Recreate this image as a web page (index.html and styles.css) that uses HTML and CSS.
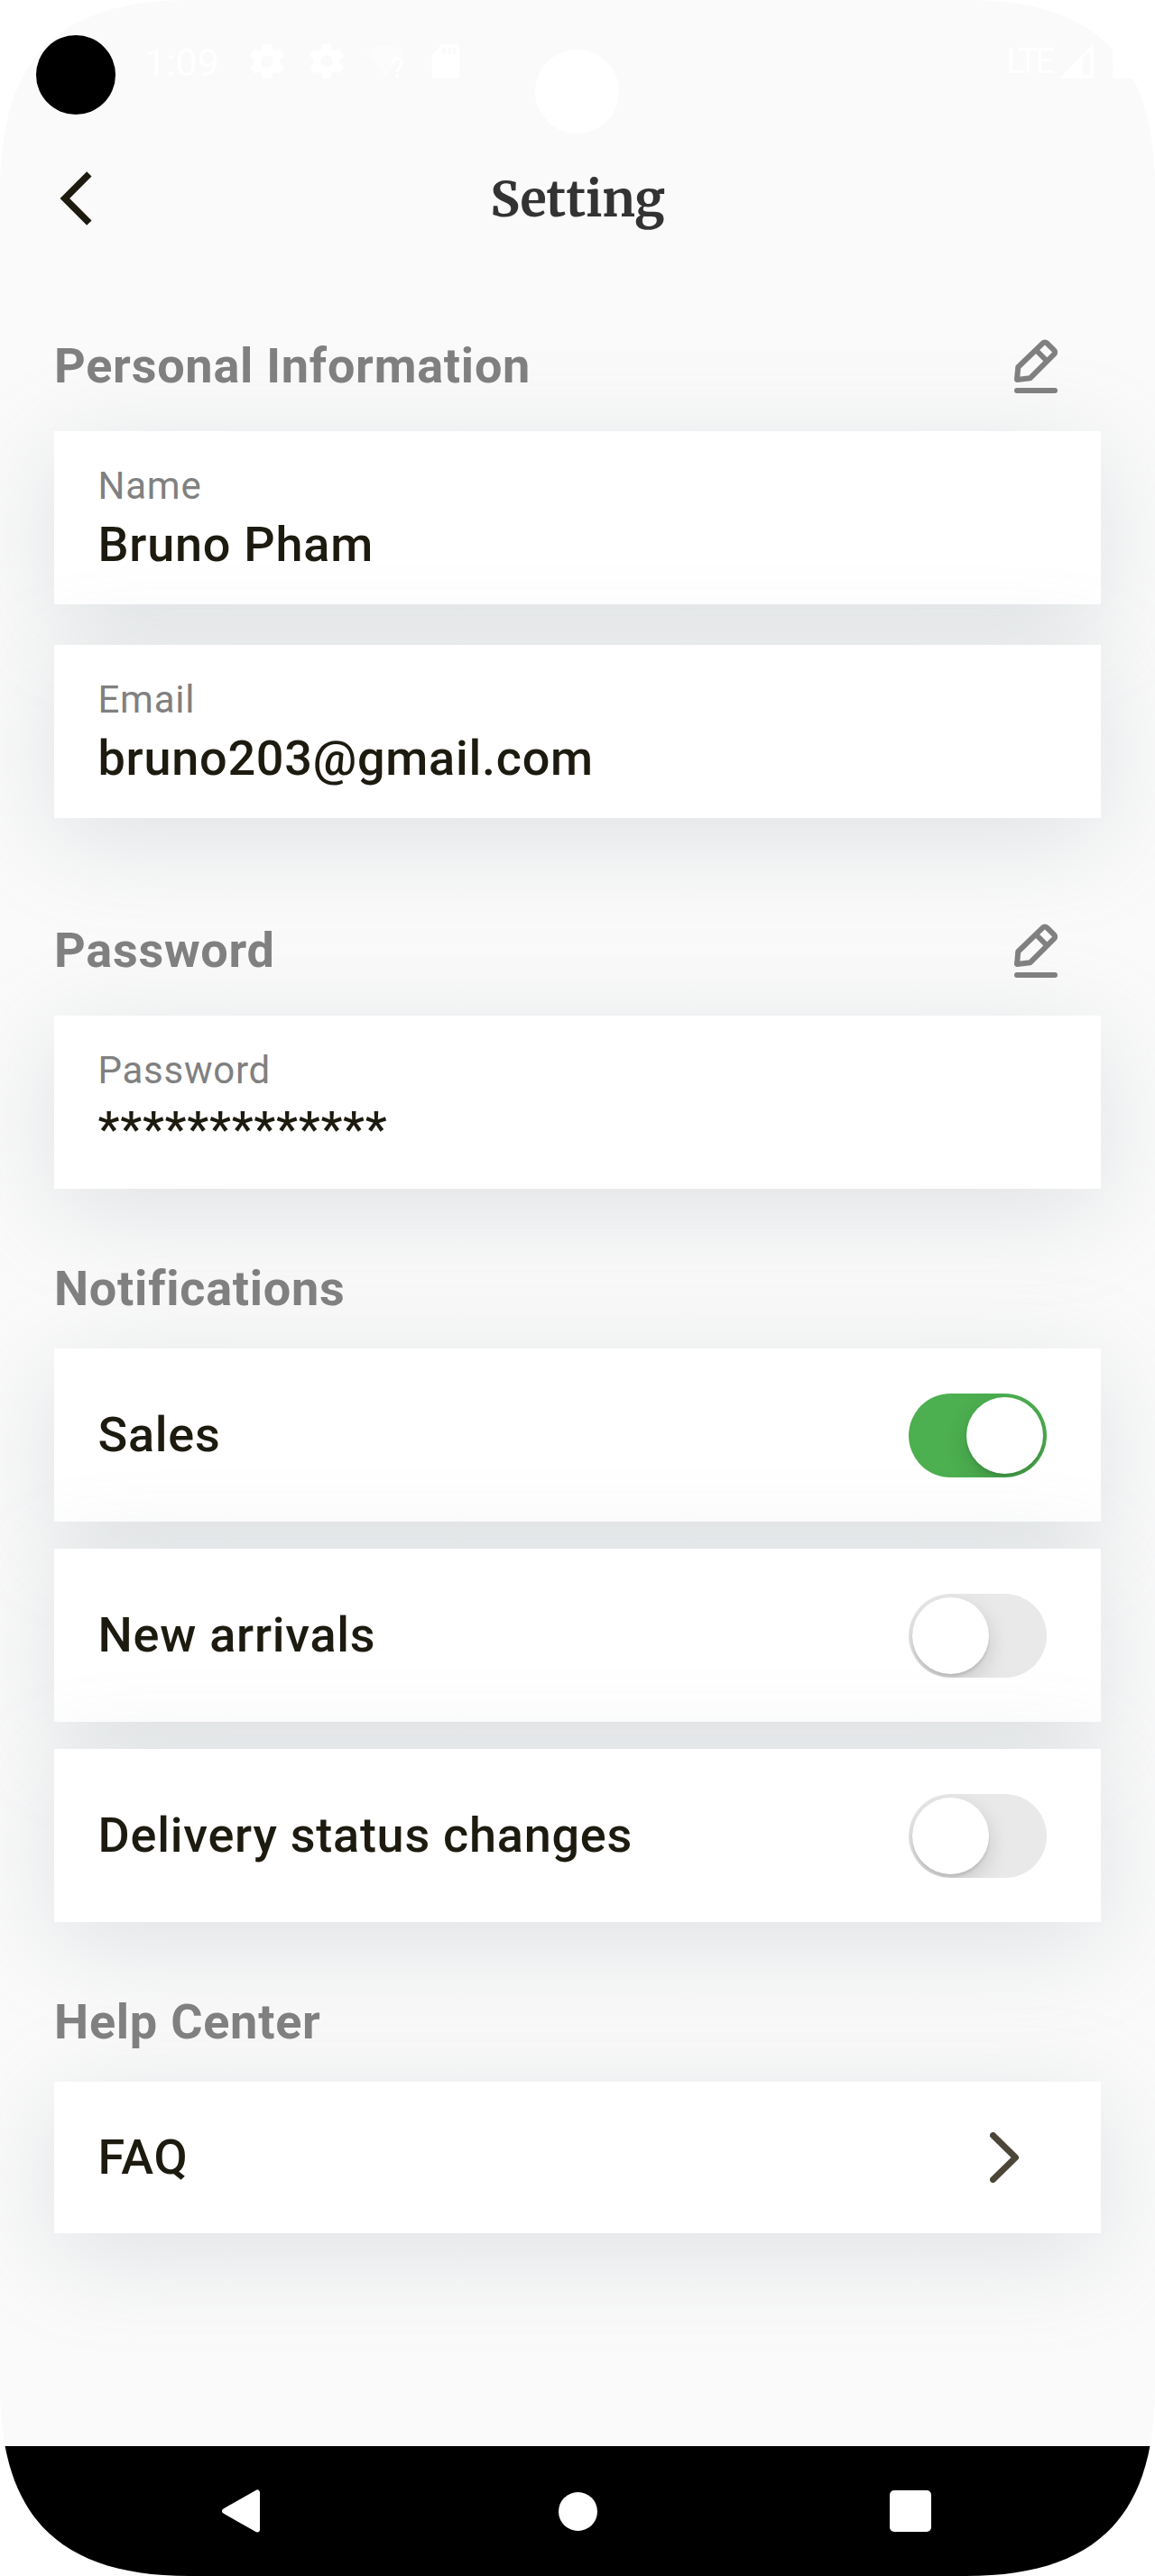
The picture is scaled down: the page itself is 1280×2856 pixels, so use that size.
FILE: index.html
```html
<!DOCTYPE html>
<html lang="en">
<head>
<meta charset="utf-8">
<title>Setting</title>
<link rel="stylesheet" href="styles.css">
</head>
<body>
<svg class="sprite" aria-hidden="true">
  <symbol id="gear" viewBox="0 0 24 24"><path d="M19.43 12.98c.04-.32.07-.64.07-.98s-.03-.66-.07-.98l2.11-1.65c.19-.15.24-.42.12-.64l-2-3.46c-.12-.22-.39-.3-.61-.22l-2.49 1c-.52-.4-1.08-.73-1.69-.98l-.38-2.65C14.46 2.18 14.25 2 14 2h-4c-.25 0-.46.18-.49.42l-.38 2.65c-.61.25-1.17.59-1.69.98l-2.49-1c-.23-.09-.49 0-.61.22l-2 3.46c-.13.22-.07.49.12.64l2.11 1.65c-.04.32-.07.65-.07.98s.03.66.07.98l-2.11 1.65c-.19.15-.24.42-.12.64l2 3.46c.12.22.39.3.61.22l2.49-1c.52.4 1.08.73 1.69.98l.38 2.65c.03.24.24.42.49.42h4c.25 0 .46-.18.49-.42l.38-2.65c.61-.25 1.17-.59 1.69-.98l2.49 1c.23.09.49 0 .61-.22l2-3.46c.12-.22.07-.49-.12-.64l-2.11-1.65zM12 15.500c-1.930 0-3.500-1.570-3.500-3.500s1.570-3.500 3.500-3.500 3.500 1.570 3.500 3.500-1.570 3.500-3.500 3.500z"/></symbol>
  <symbol id="pencil" viewBox="0 0 48 60">
    <path d="M4.300 31 31.800 4.300a3 3 0 0 1 4.300 0L44.200 12.400a3 3 0 0 1 0 4.300L17.500 43.300 3 45Z M24.500 12.500 35 23 M3 57H45"/>
  </symbol>
</svg>
<div class="screen">
  <header class="status-bar">
    <span class="camera"></span>
    <span class="clock">1:09</span>
    <div class="status-icons">
      <svg><use href="#gear"/></svg>
      <svg><use href="#gear"/></svg>
      <svg viewBox="0 0 46 46"><path class="faint" d="M1 13C13 3 33 3 43 13L22 40Z"/><path class="query" d="M30 25q0-5 5-5t5 5q0 3-3 6-2 2-2 4M35 38v4"/></svg>
      <svg viewBox="0 0 24 24"><path d="M18 2h-8L4.020 8 4 20c0 1.100.9 2 2 2h12c1.100 0 2-.9 2-2V4c0-1.100-.9-2-2-2zm-6 6h-2V4h2v4zm3 0h-2V4h2v4zm3 0h-2V4h2v4z"/></svg>
    </div>
    <span class="lens"></span>
    <div class="network">
      <span class="lte">LTE</span>
      <svg class="signal" viewBox="0 0 38 39"><path fill-rule="evenodd" d="M0 39 38 0V39ZM26 16V35H34V9Z"/></svg>
      <span class="battery"></span>
    </div>
  </header>

  <div class="app-bar">
    <svg class="back" viewBox="0 0 24 24"><path d="M17.510 3.870L15.730 2.100 5.840 12l9.900 9.900 1.770-1.770L9.380 12l8.130-8.130z"/></svg>
    <h1>Setting</h1>
  </div>

  <main>
    <section class="group">
      <div class="heading"><h2>Personal Information</h2><svg class="edit"><use href="#pencil"/></svg></div>
      <div class="cards wide">
        <div class="card field"><span class="label">Name</span><span class="value">Bruno Pham</span></div>
        <div class="card field"><span class="label">Email</span><span class="value">bruno203@gmail.com</span></div>
      </div>
    </section>
    <section class="group">
      <div class="heading"><h2>Password</h2><svg class="edit"><use href="#pencil"/></svg></div>
      <div class="card field"><span class="label">Password</span><span class="value">*************</span></div>
    </section>
    <section class="group compact">
      <div class="heading"><h2>Notifications</h2></div>
      <div class="cards">
        <div class="card row"><span class="value">Sales</span><span class="switch on"><i></i></span></div>
        <div class="card row"><span class="value">New arrivals</span><span class="switch"><i></i></span></div>
        <div class="card row"><span class="value">Delivery status changes</span><span class="switch"><i></i></span></div>
      </div>
    </section>
    <section class="group compact">
      <div class="heading"><h2>Help Center</h2></div>
      <div class="card row faq"><span class="value">FAQ</span><svg class="next" viewBox="0 0 32 56"><path d="M3.500 3.500 28.500 28 3.500 52.500"/></svg></div>
    </section>
  </main>

  <nav class="nav-bar">
    <svg class="nav-back" viewBox="0 0 48 50"><path d="M3 25 39 4.500V45.500Z"/></svg>
    <span class="nav-home"></span>
    <span class="nav-recent"></span>
  </nav>
</div>
</body>
</html>
```

FILE: styles.css
```css
* { box-sizing: border-box; }

body {
  margin: 0;
  background: #fff;
  font-family: Roboto, "Liberation Sans", sans-serif;
}

h1, h2 { margin: 0; }

.sprite { display: none; }

.screen {
  width: 1280px;
  height: 2856px;
  display: flex;
  flex-direction: column;
  overflow: hidden;
  background: #fafafa;
  clip-path: path("M0 210C0 65.500 65.500 0 210 0H1070C1214.500 0 1280 65.500 1280 210V2646C1280 2790.500 1214.500 2856 1070 2856H210C65.500 2856 0 2790.500 0 2646Z");
}

/* Status bar */
.status-bar {
  height: 150px;
  flex: none;
  display: flex;
  align-items: flex-start;
  padding-left: 40px;
  color: #fff;
}

.camera {
  width: 88px;
  height: 88px;
  margin-top: 39px;
  border-radius: 50%;
  background: #000;
}

.clock {
  width: 113px;
  margin: 44px 0 0 32px;
  font-size: 43px;
  line-height: 50px;
}

.status-icons {
  display: flex;
  gap: 20px;
  margin-top: 45px;
}

.status-icons svg { width: 46px; height: 46px; fill: #fff; }
.status-icons .faint { fill: #fcfcfc; }
.status-icons .query { fill: none; stroke: #fff; stroke-width: 3; }

.lens {
  width: 93px;
  height: 93px;
  margin: 55px 0 0 76px;
  border-radius: 50%;
  background: #fff;
}

.network {
  flex: 1;
  display: flex;
  justify-content: flex-end;
  margin-top: 48px;
}

.lte {
  margin: -3px 8px 0 0;
  font-size: 38px;
  line-height: 46px;
  letter-spacing: -3px;
}

.signal { width: 38px; height: 39px; fill: #fff; }

.battery {
  width: 47px;
  height: 39px;
  margin-left: 21px;
  background: #fff;
}

/* App bar */
.app-bar {
  height: 140px;
  flex: none;
  display: grid;
  grid-template-columns: 72px 1fr 72px;
  align-items: center;
  padding: 0 49px;
}

.back { width: 72px; height: 72px; fill: #1d1b10; }

.app-bar h1 {
  padding-top: 2px;
  color: #333;
  font: bold 54px/70px Merriweather, "DejaVu Serif Condensed", "DejaVu Serif", serif;
  letter-spacing: -.2px;
  text-align: center;
}

/* Content */
main {
  flex: 1;
  padding: 80px 60px 0;
}

.group { margin-bottom: 75px; }
.group:first-child { margin-bottom: 111px; }

.heading {
  height: 72px;
  display: flex;
  align-items: center;
  justify-content: space-between;
  margin-bottom: 36px;
  padding-right: 48px;
}

.compact .heading { margin-bottom: 30px; }

.heading h2 {
  color: #808080;
  font-size: 54px;
  font-weight: 700;
  line-height: 72px;
  letter-spacing: .75px;
}

.edit {
  width: 48px;
  height: 60px;
  fill: none;
  stroke: #808080;
  stroke-width: 6;
  stroke-linecap: round;
  stroke-linejoin: round;
}

.cards { display: grid; gap: 30px; }
.cards.wide { gap: 45px; }

.card {
  height: 192px;
  display: flex;
  background: #fff;
  box-shadow: 0 23px 110px rgba(138, 149, 158, .24);
}

.field {
  flex-direction: column;
  padding: 34px 48px 0 48.500px;
}

.row {
  align-items: center;
  justify-content: space-between;
  padding: 0 60px 0 48.500px;
}

.row.faq { height: 168px; padding-right: 91px; }

.label {
  color: #808080;
  font-size: 42px;
  line-height: 54px;
  letter-spacing: .75px;
}

.value {
  color: #1d1b10;
  font-size: 54px;
  font-weight: 500;
  line-height: 75px;
  letter-spacing: .75px;
}

.row .value { padding-bottom: 2px; }

.switch {
  width: 153px;
  height: 93px;
  display: flex;
  padding: 4px;
  overflow: hidden;
  border-radius: 47px;
  background: #e9e9e9;
}

.switch i {
  width: 85px;
  height: 85px;
  border-radius: 50%;
  background: #fff;
  box-shadow: 0 9px 24px rgba(0, 0, 0, .15), 0 3px 3px rgba(0, 0, 0, .1);
}

.switch.on { justify-content: flex-end; background: #4caf50; }

.next {
  width: 32px;
  height: 56px;
  fill: none;
  stroke: #4c4639;
  stroke-width: 7;
  stroke-linecap: round;
  stroke-linejoin: round;
}

/* Navigation bar */
.nav-bar {
  height: 144px;
  flex: none;
  display: flex;
  align-items: center;
  justify-content: space-between;
  padding: 0 248px 0 246px;
  background: #000;
}

.nav-back {
  width: 48px;
  height: 50px;
  fill: #fff;
  stroke: #fff;
  stroke-width: 6;
  stroke-linejoin: round;
}

.nav-home { width: 43px; height: 43px; border-radius: 50%; background: #fff; }
.nav-recent { width: 46px; height: 46px; border-radius: 5px; background: #fff; }
```
